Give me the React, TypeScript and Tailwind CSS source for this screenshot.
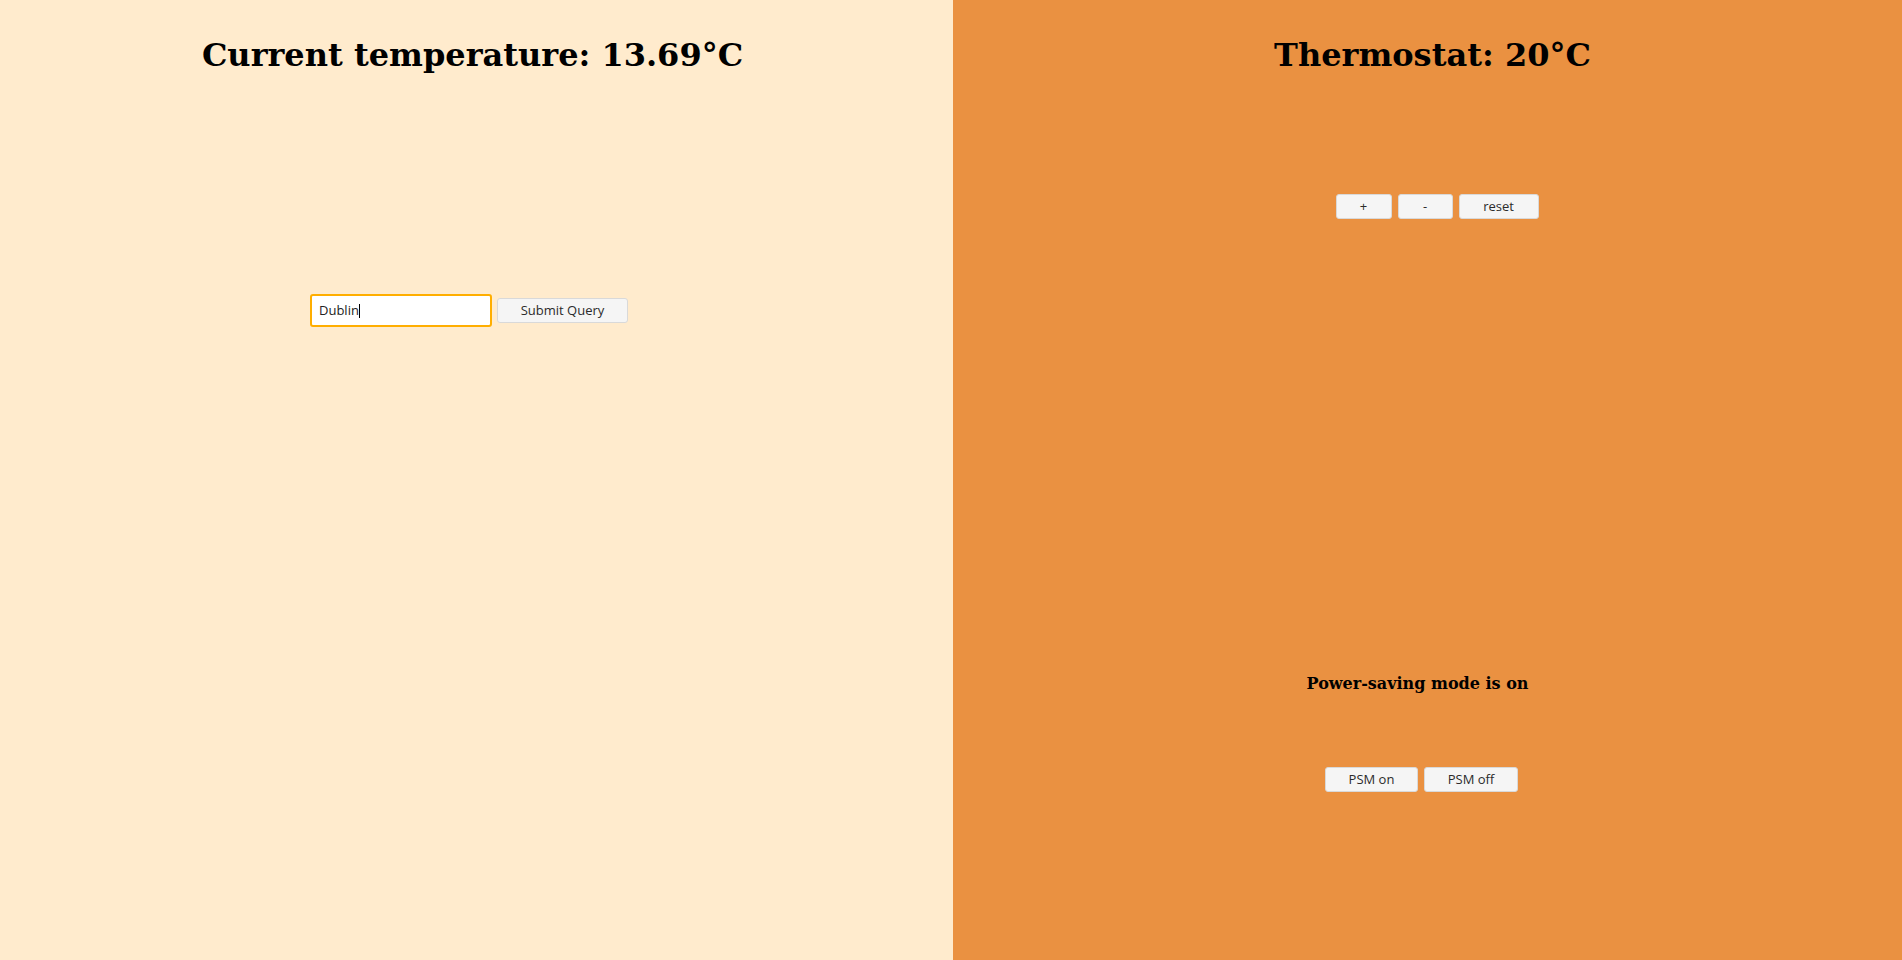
import React from "react";

const serif = "font-['DejaVu_Serif',serif]";
const sans = "font-['Open_Sans',sans-serif]";

function Btn({ children, w }: { children: React.ReactNode; w: string }) {
  return (
    <button
      className={`${sans} ${w} h-[25px] bg-[#f5f5f5] border border-[#d9d9d9] rounded-[3px] text-[13px] leading-none text-[#2b2b2b] flex items-center justify-center`}
    >
      {children}
    </button>
  );
}

export default function App() {
  return (
    <div className="flex w-full h-[960px] text-black">
      <div className="w-[953px] shrink-0 h-full bg-[#ffebcd] flex flex-col items-center">
        <h1 className={`${serif} mt-[37px] pr-[8px] text-[32px] leading-[37px] font-bold`}>
          Current temperature: 13.69°C
        </h1>
        <div className="mt-[220px] flex items-center gap-[5px] pr-[15px]">
          <div className="w-[182px] h-[33px] border-2 border-[#ffae00] rounded-[3px] bg-white flex items-center px-[7px]">
            <span className={`${sans} text-[13px] text-[#222]`}>Dublin</span>
            <span className="w-px h-[14px] bg-black" />
          </div>
          <Btn w="w-[131px]">Submit Query</Btn>
        </div>
      </div>
      <div className="flex-1 h-full bg-[#ea9141] flex flex-col items-center">
        <h1 className={`${serif} mt-[37px] pl-[10px] text-[32px] leading-[37px] font-bold`}>
          Thermostat: 20°C
        </h1>
        <div className="mt-[120px] flex gap-[6px] pl-[19px]">
          <Btn w="w-[56px]">+</Btn>
          <Btn w="w-[55px]">-</Btn>
          <Btn w="w-[80px]">reset</Btn>
        </div>
        <p className={`${serif} mt-[455px] pr-[20px] text-[16px] leading-[19px] font-bold`}>
          Power-saving mode is on
        </p>
        <div className="mt-[74px] flex gap-[6px] pr-[12px]">
          <Btn w="w-[93px]">PSM on</Btn>
          <Btn w="w-[94px]">PSM off</Btn>
        </div>
      </div>
    </div>
  );
}
